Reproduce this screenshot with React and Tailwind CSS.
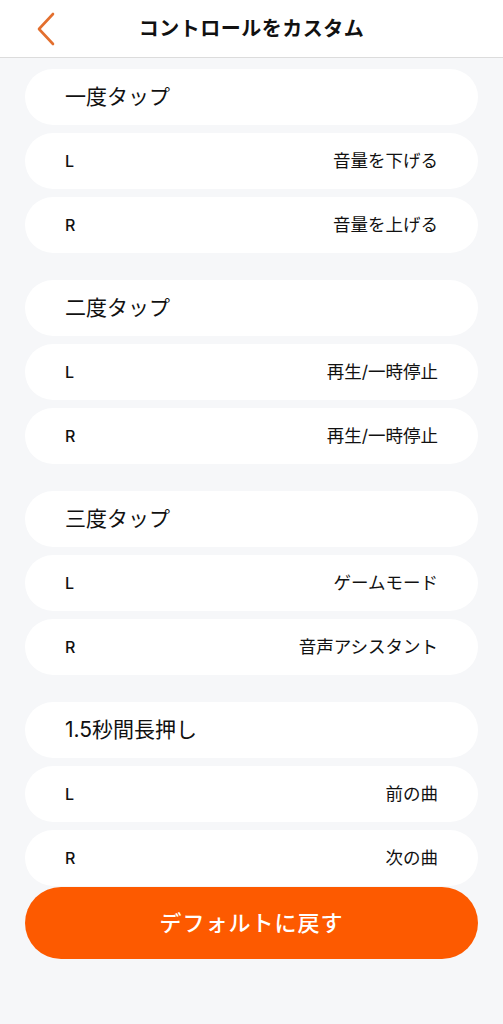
import React from "react";

const groups = [
  { title: "一度タップ", l: "音量を下げる", r: "音量を上げる" },
  { title: "二度タップ", l: "再生/一時停止", r: "再生/一時停止" },
  { title: "三度タップ", l: "ゲームモード", r: "音声アシスタント" },
  { title: "1.5秒間長押し", l: "前の曲", r: "次の曲" },
];

function Row({ left, right }) {
  return (
    <div className="h-[56px] rounded-full bg-white flex items-center justify-between pl-[40px] pr-[40px]">
      <span className="text-[16px] font-medium text-[#111]">{left}</span>
      <span className="text-[17.5px] text-[#111]">{right}</span>
    </div>
  );
}

export default function App() {
  return (
    <div
      className="relative w-[503px] h-[1024px] overflow-hidden bg-[#f6f7f9]"
      style={{ fontFamily: '"Inter", "Noto Sans CJK JP", sans-serif' }}
    >
      <div className="h-[58px] bg-white border-b border-[#dcdcdc] flex items-center justify-center relative">
        <svg
          className="absolute left-[34px] top-[12px]"
          width="24"
          height="34"
          viewBox="0 0 24 34"
          fill="none"
        >
          <path d="M19 2 L5 17 L19 32" stroke="#e36f2e" strokeWidth="2.6" strokeLinecap="round" strokeLinejoin="round" />
        </svg>
        <span className="text-[20px] font-bold text-[#111] tracking-[0.5px]">コントロールをカスタム</span>
      </div>
      <div className="flex flex-col gap-[27px] px-[25px] pt-[11px]">
        {groups.map((g) => (
          <div key={g.title} className="flex flex-col gap-[8px]">
            <div className="h-[56px] rounded-full bg-white flex items-center pl-[40px]">
              <span className="text-[21px] text-[#111]">{g.title}</span>
            </div>
            <Row left="L" right={g.l} />
            <Row left="R" right={g.r} />
          </div>
        ))}
      </div>
      <button className="absolute left-[25px] right-[25px] top-[887px] h-[72px] rounded-full bg-[#fd5a00] text-white text-[22px] font-medium tracking-[1px] flex items-center justify-center">
        デフォルトに戻す
      </button>
    </div>
  );
}
